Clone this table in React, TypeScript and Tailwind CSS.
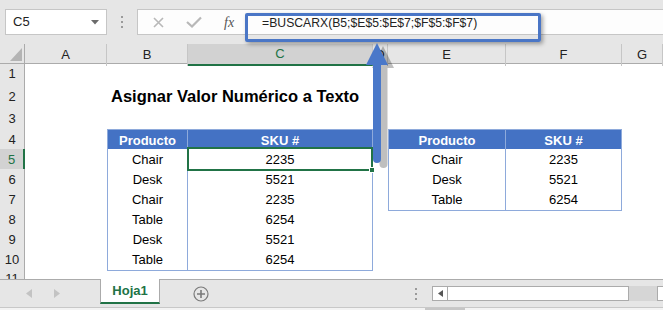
import clsx from "clsx";

// column widths of the sheet: row numbers, A..G
const GRID = "grid grid-cols-[25px_82px_81px_185px_15px_118px_116px_41px]";

const ventas = [
  ["Chair", "2235"],
  ["Desk", "5521"],
  ["Chair", "2235"],
  ["Table", "6254"],
  ["Desk", "5521"],
  ["Table", "6254"],
];

const skus = [
  ["Chair", "2235"],
  ["Desk", "5521"],
  ["Table", "6254"],
];

const rowHeights: Record<number, string> = {
  2: "h-[25px]",
};

const Cell = ({
  text,
  head,
  first,
  top,
  selected,
}: {
  text: string;
  head?: boolean;
  first?: boolean;
  top?: boolean;
  selected?: boolean;
}) => (
  <div
    className={clsx(
      "relative flex items-center justify-center pt-px border-r border-b border-[#8eaadb] text-[13px]",
      head ? "bg-[#4472c4] text-white font-bold" : "bg-white text-black",
      first && "border-l",
      top && "border-t"
    )}
  >
    {text}
    {selected && (
      <>
        <div className="absolute z-10 -top-[2px] -left-[1px] -right-[1px] -bottom-[1px] border-2 border-[#217346]" />
        <div className="absolute z-10 -right-[3px] -bottom-[3px] w-[6px] h-[6px] bg-[#217346] border border-white" />
      </>
    )}
  </div>
);

const Toolbar = () => (
  <div className="h-[44px] bg-[#e6e6e6] pt-[9px] flex items-start">
    <div className="ml-[5px] w-[102px] h-[26px] bg-white border border-[#c6c6c6] flex items-center justify-between pl-[7px] pr-[7px] text-[13px] text-[#222]">
      <span>C5</span>
      <svg width="8" height="5" viewBox="0 0 8 5">
        <polygon points="0,0 8,0 4,4.5" fill="#6b6b6b" />
      </svg>
    </div>
    <div className="w-[30px] h-[26px] flex flex-col items-center justify-center gap-[3px]">
      <span className="w-[2px] h-[2px] bg-[#9a9a9a]" />
      <span className="w-[2px] h-[2px] bg-[#9a9a9a]" />
      <span className="w-[2px] h-[2px] bg-[#9a9a9a]" />
    </div>
    <div className="flex-1 h-[26px] bg-[#fdfdfd] border-y border-l border-[#c6c6c6] flex items-center">
      <svg className="ml-[15px]" width="11" height="11" viewBox="0 0 11 11">
        <path d="M1 1 L10 10 M10 1 L1 10" stroke="#b8b8b8" strokeWidth="1.6" />
      </svg>
      <svg className="ml-[22px]" width="16" height="12" viewBox="0 0 16 12">
        <path d="M1 6 L6 10.5 L15 1.5" stroke="#b8b8b8" strokeWidth="2.2" fill="none" />
      </svg>
      <span className="ml-[22px] italic text-[14px] text-[#555] font-['Liberation_Serif',serif]">
        fx
      </span>
      <span className="ml-[28px] pt-[2px] text-[12.2px] text-[#222] whitespace-nowrap">
        =BUSCARX(B5;$E$5:$E$7;$F$5:$F$7)
      </span>
    </div>
  </div>
);

const ColumnHeaders = () => (
  <div className={clsx(GRID, "h-[20px] bg-[#e6e6e6] border-b border-[#ababab] text-[13px] text-[#222]")}>
    <div className="relative border-r border-[#ababab]">
      <svg className="absolute left-0 top-0" width="25" height="20" viewBox="0 0 25 20">
        <polygon points="22,4 22,17 10,17" fill="#b4b4b4" />
      </svg>
    </div>
    {["A", "B", "C", "D", "E", "F", "G"].map((c) => (
      <div
        key={c}
        className={clsx(
          "flex items-center justify-center border-r border-[#c6c6c6]",
          c === "C" && "bg-[#d2d2d2] text-[#217346] border-b-2 border-b-[#217346]"
        )}
      >
        {c}
      </div>
    ))}
  </div>
);

const SheetRow = ({ r }: { r: number }) => {
  const v = r >= 5 && r <= 10 ? ventas[r - 5] : null;
  const s = r >= 5 && r <= 7 ? skus[r - 5] : null;

  return (
    <div className={clsx(GRID, rowHeights[r] ?? "h-[20px]", "shrink-0")}>
      <div
        className={clsx(
          "flex items-center justify-center border-b border-b-[#c6c6c6] text-[13px]",
          r === 5
            ? "bg-[#d2d2d2] text-[#217346] border-r-2 border-r-[#217346]"
            : "bg-[#e6e6e6] text-[#222] border-r border-r-[#ababab]"
        )}
      >
        {r}
      </div>
      <div />
      {r === 2 ? (
        <div className="relative flex items-end pb-[1px] pl-[4px] whitespace-nowrap font-bold text-[16.5px] text-black">
          Asignar Valor Numérico a Texto
        </div>
      ) : r === 4 ? (
        <Cell text="Producto" head first top />
      ) : v ? (
        <Cell text={v[0]} first />
      ) : (
        <div />
      )}
      {r === 4 ? <Cell text="SKU #" head top /> : v ? <Cell text={v[1]} selected={r === 5} /> : <div />}
      <div />
      {r === 4 ? <Cell text="Producto" head first top /> : s ? <Cell text={s[0]} first /> : <div />}
      {r === 4 ? <Cell text="SKU #" head top /> : s ? <Cell text={s[1]} /> : <div />}
      <div />
    </div>
  );
};

const SheetTabs = () => (
  <>
    <div className="h-[28px] bg-[#e6e6e6] border-t border-[#ababab] flex items-start">
      <div className="w-[100px] h-[27px] flex items-center">
        <svg className="ml-[26px]" width="6" height="9" viewBox="0 0 6 9">
          <polygon points="6,0 6,9 0,4.5" fill="#c3c3c3" />
        </svg>
        <svg className="ml-[22px]" width="6" height="9" viewBox="0 0 6 9">
          <polygon points="0,0 0,9 6,4.5" fill="#c3c3c3" />
        </svg>
      </div>
      <div className="-mt-px w-[60px] h-[25px] bg-white border-x border-[#ababab] border-b-2 border-b-[#217346] flex items-center justify-center font-bold text-[13px] text-[#217346]">
        Hoja1
      </div>
      <div className="w-[82px] h-[27px] flex items-center justify-center">
        <svg width="16" height="16" viewBox="0 0 16 16">
          <circle cx="8" cy="8" r="7" stroke="#7a7a7a" strokeWidth="1.2" fill="none" />
          <path d="M8 4 V12 M4 8 H12" stroke="#7a7a7a" strokeWidth="1.6" />
        </svg>
      </div>
      <div className="flex-1" />
      <div className="w-[16px] h-[27px] flex flex-col items-center justify-center gap-[3px]">
        <span className="w-[2px] h-[2px] bg-[#9a9a9a]" />
        <span className="w-[2px] h-[2px] bg-[#9a9a9a]" />
        <span className="w-[2px] h-[2px] bg-[#9a9a9a]" />
      </div>
      <div className="ml-[8px] mt-[6px] h-[15px] flex">
        <div className="w-[16px] bg-white border border-[#ababab] flex items-center justify-center">
          <svg width="5" height="7" viewBox="0 0 5 7">
            <polygon points="5,0 5,7 0,3.5" fill="#555" />
          </svg>
        </div>
        <div className="w-[181px] bg-white border-y border-r border-[#ababab]" />
        <div className="w-[28px] bg-[#d6d6d6]" />
        <div className="w-[6px] bg-white border-y border-l border-[#ababab]" />
      </div>
    </div>
    <div className="h-[3px] bg-[#f3f3f3] border-t border-[#c8c8c8] flex">
      <div className="ml-[425px] w-[40px] bg-[#c6c6c6]" />
    </div>
  </>
);

export default function App() {
  return (
    <div className="relative w-[663px] h-[310px] overflow-hidden bg-white font-['Liberation_Sans',Arial,sans-serif]">
      <Toolbar />
      <ColumnHeaders />
      <div className="h-[215px] overflow-hidden flex flex-col">
        {[1, 2, 3, 4, 5, 6, 7, 8, 9, 10, 11].map((r) => (
          <SheetRow key={r} r={r} />
        ))}
      </div>
      <SheetTabs />

      {/* callout around the formula */}
      <div className="absolute left-[245px] top-[13px] w-[296px] h-[29px] border-[3px] border-[#4a76c6] rounded-[2px] shadow-[2px_2px_4px_rgba(0,0,0,0.35)] pointer-events-none" />

      {/* arrow pointing from the selected cell up to the formula */}
      <svg className="absolute z-20 left-[362px] top-[40px] pointer-events-none" width="34" height="130" viewBox="0 0 34 130">
        <path
          d="M7 25 L18 3 L29 25 L22.5 25 L22.5 121 Q22.5 125 18.5 125 L18.5 125 Q14.5 125 14.5 121 L14.5 25 Z"
          fill="rgba(0,0,0,0.25)"
          transform="translate(3,3)"
        />
        <path
          d="M4 25 L15 3 L26 25 L19 25 L19 119 Q19 123 15 123 Q11 123 11 119 L11 25 Z"
          fill="#4a78c9"
        />
      </svg>
    </div>
  );
}
